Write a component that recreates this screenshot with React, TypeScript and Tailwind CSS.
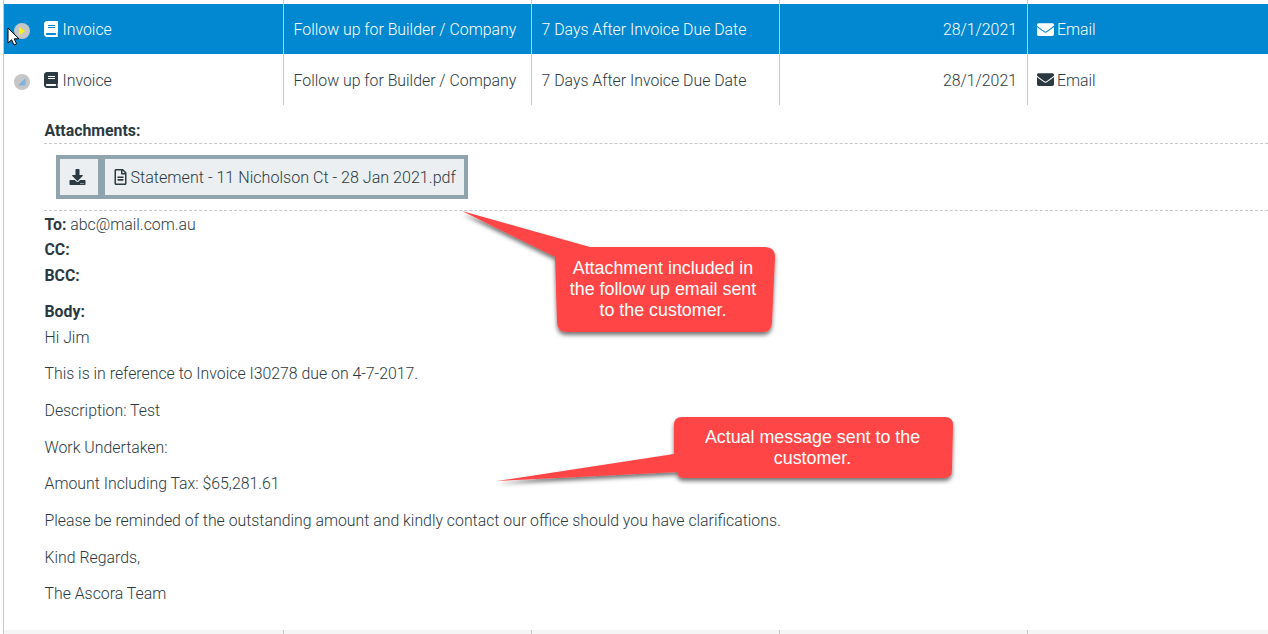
import React from "react";
import { FaBook, FaEnvelope, FaDownload, FaRegFileAlt } from "react-icons/fa";

function Row({ selected }: { selected?: boolean }) {
  const tone = selected ? "bg-[#0288d1] text-white h-[50px]" : "bg-white text-[#2b3a42] h-[51px]";
  const cell = "flex items-center border-r border-[#c8c8c8] h-full";
  const nudge = selected ? "pt-[1px]" : "pt-[2px]";
  return (
    <div className={`grid grid-cols-[280px_248px_248px_248px_1fr] ${tone}`}>
      <div className={`${cell} pl-[40px] gap-[4.5px]`}>
        <FaBook className="w-[14px] h-[16px]" />
        <span className={nudge}>Invoice</span>
      </div>
      <div className={`${cell} pl-[9.5px]`}><span className={nudge}>Follow up for Builder / Company</span></div>
      <div className={`${cell} pl-[9.5px]`}><span className={nudge}>7 Days After Invoice Due Date</span></div>
      <div className={`${cell} justify-end pr-[10px]`}><span className={nudge}>28/1/2021</span></div>
      <div className="flex items-center pl-[9px] gap-[3px] h-full">
        <FaEnvelope className="w-[17px] h-[17px]" />
        <span className={nudge}>Email</span>
      </div>
    </div>
  );
}

function Spacer({ className }: { className: string }) {
  return (
    <div className={`grid grid-cols-[280px_248px_248px_248px_1fr] ${className}`}>
      <div className="border-r border-[#c8c8c8]" />
      <div className="border-r border-[#c8c8c8]" />
      <div className="border-r border-[#c8c8c8]" />
      <div className="border-r border-[#c8c8c8]" />
      <div />
    </div>
  );
}

const paragraphs = [
  "This is in reference to Invoice I30278 due on 4-7-2017.",
  "Description: Test",
  "Work Undertaken:",
  "Amount Including Tax: $65,281.61",
  "Please be reminded of the outstanding amount and kindly contact our office should you have clarifications.",
  "Kind Regards,",
  "The Ascora Team",
];

export default function App() {
  return (
    <div className="relative w-[1268px] h-[634px] overflow-hidden bg-white font-['Roboto',sans-serif] font-light text-[15.85px] text-[#2b3a42]">
      <div className="ml-[3px] h-[634px] border-l border-[#c8c8c8] flex flex-col">
        <Spacer className="h-[4px]" />
        <Row selected />
        <Row />
        <div className="h-[525px] pl-[40px]">
          <div className="pt-[15px] h-[39px] pl-[0.5px] leading-[22px] font-bold border-b border-dashed border-[#c8c8c8]">
            Attachments:
          </div>
          <div className="h-[67px] border-b border-dashed border-[#c8c8c8] pl-[12px] pt-[11px]">
            <div className="inline-flex h-[44px] bg-[#90a4ae] p-[4px] gap-[7px] pl-[3.5px]">
              <div className="w-[38px] bg-[#eceff1] flex items-center justify-center pr-[2px]">
                <FaDownload className="w-[17px] h-[16px]" />
              </div>
              <div className="bg-[#eceff1] flex items-center pl-[9px] pr-[8px] gap-[4px] text-[16.1px]">
                <FaRegFileAlt className="w-[13px] h-[16px]" />
                <span className="pt-[2px]">Statement - 11 Nicholson Ct - 28 Jan 2021.pdf</span>
              </div>
            </div>
          </div>
          <div className="leading-[26px] pt-[1px] pl-[0.5px]">
            <div className="h-[25px]"><b className="font-bold">To:</b> abc@mail.com.au</div>
            <div className="h-[26px] font-bold">CC:</div>
            <div className="h-[26px] font-bold">BCC:</div>
            <div className="h-[26px] mt-[10px] font-bold">Body:</div>
            <div className="h-[25.7px]">Hi Jim</div>
            {paragraphs.map((p) => (
              <p key={p} className="mt-[10.65px] h-[26px]">{p}</p>
            ))}
          </div>
        </div>
        <Spacer className="h-[4px] bg-[#f5f5f5]" />
      </div>

      {/* Status bullets */}
      <svg className="absolute left-[14px] top-[23px]" width="16" height="16" viewBox="0 0 16 16">
        <circle cx="8" cy="8" r="8" fill="#c6c6c6" />
        <path d="M5 3.5 L11 8 L5 12.5 Z" fill="#f4f41a" />
      </svg>
      <svg className="absolute left-[14px] top-[74px]" width="16" height="16" viewBox="0 0 16 16">
        <circle cx="8" cy="8" r="8" fill="#c6c6c6" />
        <path d="M11.5 4 V11.5 H4 Z" fill="#7fb2dc" />
      </svg>

      {/* Mouse cursor */}
      <svg className="absolute left-[7px] top-[27px]" width="13" height="20" viewBox="0 0 13 20">
        <path d="M1 1 V16 L4.6 12.8 L7 18 L9.6 16.8 L7.2 11.8 H12 Z" fill="#fff" stroke="#000" strokeWidth="1" />
      </svg>

      {/* Callout: attachment */}
      <div className="absolute left-[455px] top-[205px] w-[330px] h-[140px]">
        <svg className="absolute inset-0" width="330" height="140" viewBox="0 0 330 140">
          <defs>
            <filter id="callout-shadow-a" x="-10%" y="-10%" width="120%" height="130%">
              <feDropShadow dx="0" dy="3" stdDeviation="2" floodColor="#000" floodOpacity="0.55" />
            </filter>
          </defs>
          <path
            d="M7 6 L135 42 H310 Q320 42 320 52 L317 117 Q317 127 307 127 H112 Q102 127 102 117 L100 52 Z"
            fill="#ff4545"
            filter="url(#callout-shadow-a)"
          />
        </svg>
        <div className="absolute left-[100px] top-[53px] w-[216px] text-center font-['Liberation_Sans',sans-serif] font-normal text-white text-[17.85px] leading-[21px] px-[8px]">
          Attachment included in the follow up email sent to the customer.
        </div>
      </div>

      {/* Callout: message */}
      <div className="absolute left-[490px] top-[410px] w-[475px] h-[85px]">
        <svg className="absolute inset-0" width="475" height="85" viewBox="0 0 475 85">
          <defs>
            <filter id="callout-shadow-b" x="-5%" y="-15%" width="110%" height="140%">
              <feDropShadow dx="0" dy="3" stdDeviation="2" floodColor="#000" floodOpacity="0.55" />
            </filter>
          </defs>
          <path
            d="M7 71 L184 44 V15 Q184 7 192 7 H455 Q463 7 463 15 L462 60 Q462 68 454 68 H195 Q187 68 187 62 Z"
            fill="#ff4545"
            filter="url(#callout-shadow-b)"
          />
        </svg>
        <div className="absolute left-[191.5px] top-[17px] w-[262px] text-center font-['Liberation_Sans',sans-serif] font-normal text-white text-[17.85px] leading-[21px]">
          Actual message sent to the customer.
        </div>
      </div>
    </div>
  );
}
